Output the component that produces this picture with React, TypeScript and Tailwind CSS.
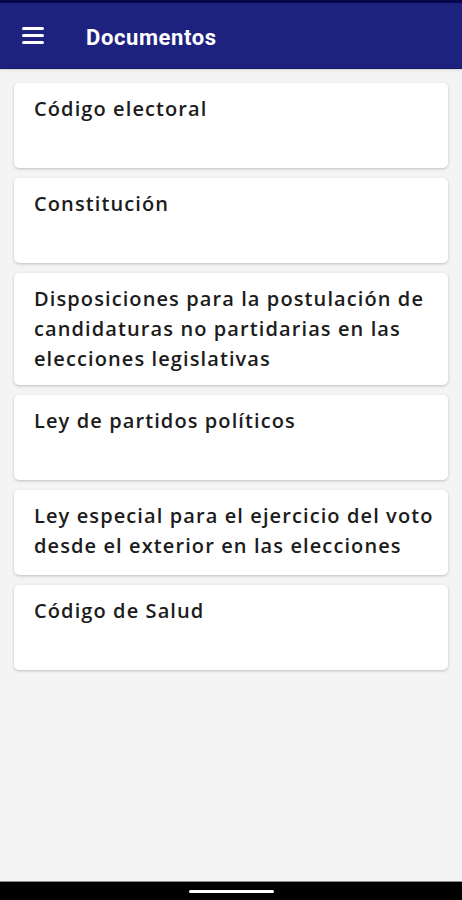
import React from 'react';

const documentos = [
  'Código electoral',
  'Constitución',
  'Disposiciones para la postulación de candidaturas no partidarias en las elecciones legislativas',
  'Ley de partidos políticos',
  'Ley especial para el ejercicio del voto desde el exterior en las elecciones',
  'Código de Salud',
];

export default function App() {
  return (
    <div className="flex flex-col h-[900px] bg-[#f4f4f4] font-['Open_Sans',sans-serif]">
      {/* Barra superior */}
      <div className="h-[3px] bg-[#07074f]"></div>
      <header className="h-[66px] bg-[#1e227f] border-b border-[#151865] flex items-center shadow-sm">
        <button className="ml-[22px] w-[22px] flex flex-col gap-[4px]">
          <span className="block h-[3px] bg-white rounded-sm"></span>
          <span className="block h-[3px] bg-white rounded-sm"></span>
          <span className="block h-[3px] bg-white rounded-sm"></span>
        </button>
        <h1 className="ml-[42px] mt-[4px] text-white text-[22px] font-bold font-['Roboto',sans-serif] tracking-[0.6px]">
          Documentos
        </h1>
      </header>

      {/* Lista de documentos */}
      <div className="flex-1 flex flex-col gap-[10px] px-[14px] pt-[14px]">
        {documentos.map((doc) => (
          <div
            key={doc}
            className="min-h-[85px] bg-white rounded-[5px] shadow-[0_1px_3px_rgba(0,0,0,0.22)] pl-[20px] pr-[6px] pt-[11px] pb-[11px]"
          >
            <p className="text-[20px] leading-[30px] font-semibold tracking-[1.1px] text-[#1c1c1c]">{doc}</p>
          </div>
        ))}
      </div>

      {/* Barra de navegación del sistema */}
      <div className="h-[19px] bg-black border-t border-[#8a8a8a] flex items-center justify-center">
        <div className="w-[85px] h-[3px] bg-white rounded-full"></div>
      </div>
    </div>
  );
}
